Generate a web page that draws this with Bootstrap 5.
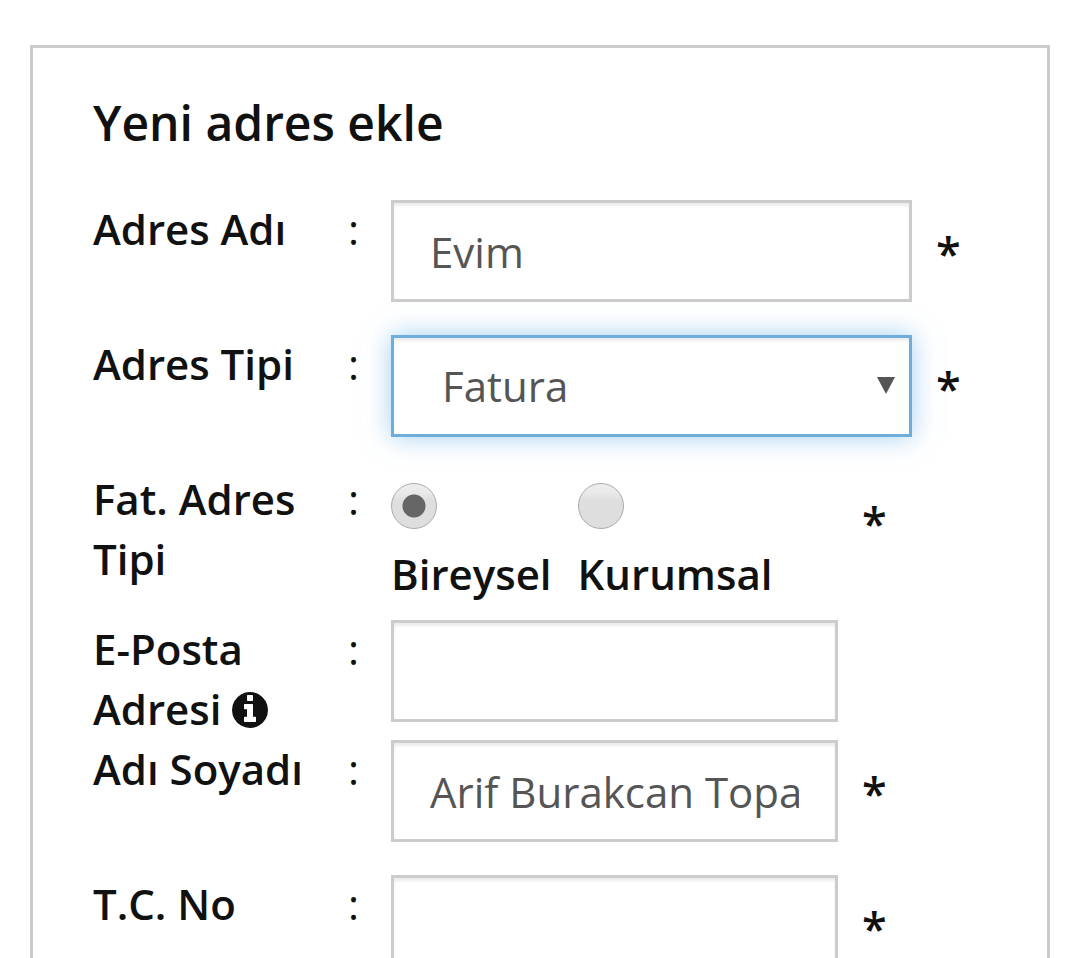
<!DOCTYPE html>
<html lang="tr">
<head>
<meta charset="utf-8">
<meta name="viewport" content="width=device-width, initial-scale=1">
<title>Yeni adres ekle</title>
<link rel="stylesheet" href="https://cdn.jsdelivr.net/npm/bootstrap@5.3.0/dist/css/bootstrap.min.css">
<style>
html{scrollbar-width:none}
html::-webkit-scrollbar{display:none}
body{font-family:"Open Sans",sans-serif;font-size:42px;line-height:60px;color:#111;background:#fff}
.address-panel{border:3px solid #ccc;margin:45px 30px;padding:45px 60px}
.panel-title{font-size:48px;line-height:60px;font-weight:600;margin-bottom:46px}
.field-row{display:grid;grid-template-columns:255px 43px minmax(0,1fr);min-height:135px}
.field-row.tall{min-height:150px}
.field-row.compact{min-height:120px}
.field-body{padding-top:1px}
.field-label,.required-mark,.choice-label{font-weight:600}
.form-control,.form-select{height:102px;border:3px solid #ccc;border-radius:0;font-size:42px;line-height:60px;color:#555;padding:0 36px;box-shadow:inset 0 3px 3px rgba(0,0,0,.075)}
.form-control:focus,.form-select:focus,.form-select.is-current{border-color:#6faedb;box-shadow:inset 0 3px 3px rgba(0,0,0,.075),0 0 24px rgba(102,175,233,.6)}
.form-select{background-image:none;padding-left:48px}
.control-wide{width:87.4%}
.required-mark{font-size:45px;line-height:106px;height:102px;margin-left:24px}
.select-arrow{right:17px;top:42px;pointer-events:none}
.info-icon{width:36px;height:36px;vertical-align:-3px}
.choice{padding:13px 26px 0 0}
.choice .form-check-input{display:block;float:none;width:46px;height:46px;border:1px solid #aaa;background:linear-gradient(#eee 0%,#e9e9e9 20%,#dedede 38%,#dedede 100%);margin:0 0 15px}
.choice .form-check-input:checked{background:radial-gradient(circle,#666 11px,transparent 12px),linear-gradient(#eee 0%,#e9e9e9 20%,#dedede 38%,#dedede 100%);border-color:#aaa}
.choice-label{display:block}
</style>
<script src="https://cdn.jsdelivr.net/npm/bootstrap@5.3.0/dist/js/bootstrap.bundle.min.js"></script>
</head>
<body>
<main class="address-panel">
<h1 class="panel-title">Yeni adres ekle</h1>
<form>
  <div class="field-row">
    <label class="field-label" for="addressName">Adres Adı</label><span>:</span>
    <div class="field-body d-flex align-items-start">
      <div class="control-wide"><input id="addressName" type="text" class="form-control" value="Evim"></div>
      <span class="required-mark">*</span>
    </div>
  </div>
  <div class="field-row">
    <label class="field-label" for="addressType">Adres Tipi</label><span>:</span>
    <div class="field-body d-flex align-items-start">
      <div class="control-wide position-relative">
        <select id="addressType" class="form-select is-current"><option>Fatura</option></select>
        <svg class="select-arrow position-absolute" width="18" height="17" viewBox="0 0 18 17" aria-hidden="true"><path d="M0 0h18L9 17z" fill="#555"/></svg>
      </div>
      <span class="required-mark">*</span>
    </div>
  </div>
  <div class="field-row tall" role="radiogroup" aria-labelledby="invoiceType">
    <span class="field-label" id="invoiceType">Fat. Adres Tipi</span><span>:</span>
    <div class="field-body d-flex align-items-start">
      <div class="w-75 d-flex">
        <div class="choice">
          <input class="form-check-input" type="radio" name="invoiceType" id="personal" checked>
          <label class="choice-label" for="personal">Bireysel</label>
        </div>
        <div class="choice">
          <input class="form-check-input" type="radio" name="invoiceType" id="corporate">
          <label class="choice-label" for="corporate">Kurumsal</label>
        </div>
      </div>
      <span class="required-mark">*</span>
    </div>
  </div>
  <div class="field-row compact">
    <label class="field-label" for="email">E-Posta Adresi <svg class="info-icon" viewBox="0 128 1536 1536" fill="currentColor" aria-hidden="true"><path d="M1024 1376v-160q0-14-9-23t-23-9h-96v-512q0-14-9-23t-23-9h-320q-14 0-23 9t-9 23v160q0 14 9 23t23 9h96v320h-96q-14 0-23 9t-9 23v160q0 14 9 23t23 9h448q14 0 23-9t9-23zm-128-896v-192q0-14-9-23t-23-9h-192q-14 0-23 9t-9 23v192q0 14 9 23t23 9h192q14 0 23-9t9-23zm640 416q0 209-103 385.5t-279.5 279.5-385.5 103-385.5-103-279.5-279.5-103-385.5 103-385.5 279.5-279.5 385.5-103 385.5 103 279.5 279.5 103 385.5z"/></svg></label><span>:</span>
    <div class="field-body d-flex align-items-start">
      <div class="w-75"><input id="email" type="email" class="form-control"></div>
    </div>
  </div>
  <div class="field-row">
    <label class="field-label" for="fullName">Adı Soyadı</label><span>:</span>
    <div class="field-body d-flex align-items-start">
      <div class="w-75"><input id="fullName" type="text" class="form-control" value="Arif Burakcan Topa"></div>
      <span class="required-mark">*</span>
    </div>
  </div>
  <div class="field-row">
    <label class="field-label" for="idNumber">T.C. No</label><span>:</span>
    <div class="field-body d-flex align-items-start">
      <div class="w-75"><input id="idNumber" type="text" class="form-control"></div>
      <span class="required-mark">*</span>
    </div>
  </div>
</form>
</main>
</body>
</html>
